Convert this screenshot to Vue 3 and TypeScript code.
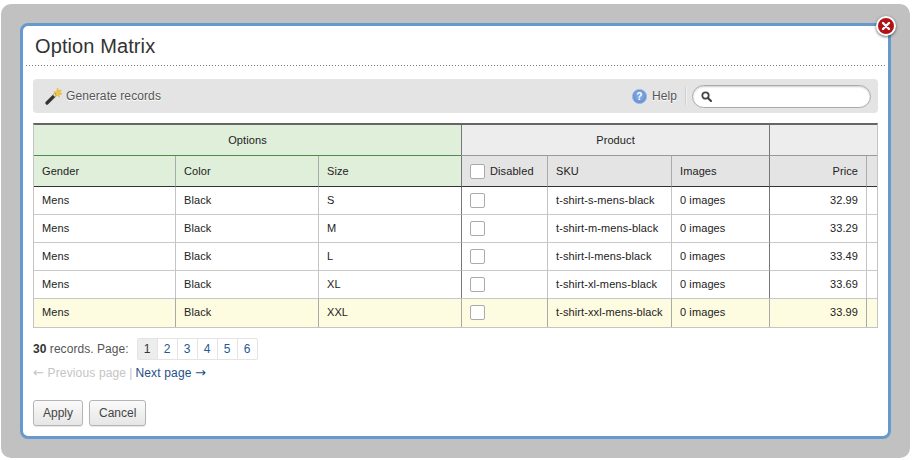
<template>
  <div class="backdrop">
    <div class="dialog">
      <button class="close" aria-label="Close">
        <svg width="10" height="10" viewBox="0 0 10 10">
          <path d="M2 2l6 6M8 2l-6 6" stroke="#fff" stroke-width="2.4" stroke-linecap="round" />
        </svg>
      </button>
      <h1 class="title">Option Matrix</h1>

      <div class="toolbar">
        <a class="generate">
          <svg width="18" height="18" viewBox="0 0 18 18">
            <path d="M2 16L10 8" stroke="#333" stroke-width="3.2" stroke-linecap="round" />
            <path d="M9 9l1.6-1.6" stroke="#ddd" stroke-width="3" />
            <path d="M12.5 1l.9 2.8 2.8-.9-1.3 2.6L17 7l-2.9.4.3 2.9-2-2.2-2.4 1.3 1-2.8-2.2-1.8 2.9.1z" fill="#f3c93a" stroke="#e2a71c" stroke-width=".5" />
          </svg>
          Generate records
        </a>
        <span class="help">
          <span class="help-icon">?</span>
          Help
        </span>
        <span class="sep"></span>
        <div class="search">
          <svg width="11" height="11" viewBox="0 0 11 11">
            <circle cx="4.5" cy="4.5" r="3.2" fill="none" stroke="#444" stroke-width="1.8" />
            <path d="M7 7l3 3" stroke="#444" stroke-width="2.2" stroke-linecap="round" />
          </svg>
        </div>
      </div>

      <table class="matrix">
        <colgroup>
          <col v-for="w in colWidths" :key="w.id" :style="{ width: w.px + 'px' }" />
        </colgroup>
        <thead>
          <tr class="groups">
            <th colspan="3" class="green center">Options</th>
            <th colspan="3" class="grey center strong-left">Product</th>
            <th colspan="2" class="grey strong-left"></th>
          </tr>
          <tr class="labels">
            <th class="green">Gender</th>
            <th class="green">Color</th>
            <th class="green">Size</th>
            <th class="grey2 strong-left">
              <span class="check-label"><span class="check"></span>Disabled</span>
            </th>
            <th class="grey2">SKU</th>
            <th class="grey2">Images</th>
            <th class="grey2 right strong-left">Price</th>
            <th class="grey2"></th>
          </tr>
        </thead>
        <tbody>
          <tr v-for="row in rows" :key="row.sku" :class="{ hovered: row.size === 'XXL' }">
            <td>Mens</td>
            <td>Black</td>
            <td>{{ row.size }}</td>
            <td class="strong-left"><span class="check"></span></td>
            <td>{{ row.sku }}</td>
            <td>0 images</td>
            <td class="right strong-left">{{ row.price }}</td>
            <td></td>
          </tr>
        </tbody>
      </table>

      <div class="paging">
        <span class="count"><b>30</b> records. Page:</span>
        <div class="pages">
          <a v-for="p in pages" :key="p" :class="{ current: p === 1 }">{{ p }}</a>
        </div>
      </div>
      <div class="prev-next">
        <span class="off"><span class="arrow">←</span> Previous page</span>
        <span class="off bar">|</span>
        <a>Next page <span class="arrow">→</span></a>
      </div>

      <div class="actions">
        <button class="btn">Apply</button>
        <button class="btn">Cancel</button>
      </div>
    </div>
  </div>
</template>

<script setup lang="ts">
const colWidths = [
  { id: 'gender', px: 141 },
  { id: 'color', px: 143 },
  { id: 'size', px: 143 },
  { id: 'disabled', px: 86 },
  { id: 'sku', px: 124 },
  { id: 'images', px: 98 },
  { id: 'price', px: 97 },
  { id: 'end', px: 11 }
];

const rows = [
  { size: 'S', sku: 't-shirt-s-mens-black', price: '32.99' },
  { size: 'M', sku: 't-shirt-m-mens-black', price: '33.29' },
  { size: 'L', sku: 't-shirt-l-mens-black', price: '33.49' },
  { size: 'XL', sku: 't-shirt-xl-mens-black', price: '33.69' },
  { size: 'XXL', sku: 't-shirt-xxl-mens-black', price: '33.99' }
];

const pages = [1, 2, 3, 4, 5, 6];
</script>

<style>
html,
body {
  margin: 0;
  background: #fff;
}
</style>

<style scoped>
.backdrop {
  box-sizing: border-box;
  width: 909px;
  height: 454px;
  margin: 4px 0 0 1px;
  padding: 19px;
  background: #c1c1c1;
  border-radius: 10px;
  font-family: "Liberation Sans", Arial, sans-serif;
}

.dialog {
  position: relative;
  box-sizing: border-box;
  width: 871px;
  height: 416px;
  background: #fff;
  border: 3px solid #6699cc;
  border-radius: 8px;
}

.close {
  position: absolute;
  top: -10px;
  right: -8px;
  box-sizing: border-box;
  width: 20px;
  height: 20px;
  padding: 0;
  display: flex;
  align-items: center;
  justify-content: center;
  background: #b01217;
  border: 2px solid #fff;
  border-radius: 50%;
  box-shadow: 0 1px 3px rgba(0, 0, 0, 0.6);
}

.title {
  box-sizing: border-box;
  height: 40px;
  margin: 0 3px;
  padding: 6px 9px 0;
  font-size: 20px;
  line-height: 28px;
  letter-spacing: 0.1px;
  font-weight: normal;
  color: #333;
  background: linear-gradient(to right, #777 33%, transparent 0) left bottom / 3px 1px repeat-x;
}

.toolbar {
  display: flex;
  align-items: center;
  height: 34px;
  margin: 13px 10px 0;
  padding: 0 7px 0 12px;
  background: #e4e4e4;
  border-radius: 4px;
  font-size: 12px;
  letter-spacing: 0.1px;
  color: #555;
  text-shadow: 0 1px 0 #fff;
}

.generate {
  display: flex;
  align-items: center;
  gap: 3px;
  margin-right: auto;
}

.help {
  display: flex;
  align-items: center;
  gap: 5px;
}

.help-icon {
  box-sizing: border-box;
  width: 15px;
  height: 15px;
  border-radius: 50%;
  border: 1px solid #8fb0dc;
  background: radial-gradient(circle at 50% 45%, #7ea6e0 30%, #4f82c8);
  color: #fff;
  font-size: 10px;
  font-weight: bold;
  line-height: 13px;
  text-align: center;
  text-shadow: none;
}

.sep {
  width: 1px;
  height: 18px;
  margin: 0 5px 0 8px;
  background: #d0d0d0;
  border-right: 1px solid #f2f2f2;
}

.search {
  box-sizing: border-box;
  display: flex;
  align-items: center;
  width: 179px;
  height: 23px;
  padding-left: 8px;
  background: #fff;
  border: 1px solid #aaa;
  border-radius: 12px;
  box-shadow: inset 0 1px 2px rgba(0, 0, 0, 0.2);
}

.matrix {
  box-sizing: border-box;
  width: 845px;
  margin: 10px 0 0 10px;
  table-layout: fixed;
  border-collapse: separate;
  border-spacing: 0;
  border-top: 2px solid #666;
  border-left: 1px solid #c4c4c4;
  border-right: 1px solid #c4c4c4;
  border-bottom: 1px solid #c4c4c4;
  font-size: 11px;
  letter-spacing: 0.1px;
  color: #222;
}

th,
td {
  box-sizing: border-box;
  padding: 0 8px;
  text-align: left;
  font-weight: normal;
  border-left: 1px solid #c4c4c4;
}

th:first-child,
td:first-child {
  border-left: 0;
}

.groups th {
  height: 31px;
  border-bottom: 1px solid #999;
}

.groups th.green {
  border-bottom-color: #4f8a4f;
}

.labels th {
  height: 31px;
  border-bottom: 1px solid #333;
  border-left-color: #aaa;
}

tbody td {
  height: 28px;
  padding-bottom: 2px;
  border-top: 1px solid #c8c8c8;
}

tbody tr:first-child td {
  border-top: 0;
  height: 27px;
}

tbody tr:last-child td {
  height: 29px;
  padding-bottom: 3px;
}

tbody .check {
  margin: 1px 0 -1px;
}

.center {
  text-align: center;
}

.right {
  text-align: right;
}

.green {
  background: #dfefd9;
}

.grey {
  background: #ededed;
}

.grey2 {
  background: #e4e4e4;
}

th.strong-left,
td.strong-left,
.labels th.strong-left {
  border-left-color: #777;
}

.hovered td {
  background: #fdfbe0;
  border-left-color: #aaa;
}

.check-label {
  display: flex;
  align-items: center;
  gap: 5px;
}

.check {
  display: block;
  box-sizing: border-box;
  width: 15px;
  height: 15px;
  background: #fff;
  border: 1px solid #aaa;
  border-radius: 2px;
}

.paging {
  display: flex;
  align-items: center;
  gap: 8px;
  margin: 10px 0 0 10px;
  font-size: 12px;
  color: #555;
}

.count {
  letter-spacing: 0.05px;
}

.paging b {
  color: #333;
}

.pages {
  display: flex;
  border: 1px solid #e4e4e4;
  border-radius: 2px;
}

.pages a {
  box-sizing: border-box;
  width: 20px;
  height: 20px;
  line-height: 20px;
  text-align: center;
  color: #1f5a94;
  border-left: 1px solid #e4e4e4;
}

.pages a:first-child {
  width: 19px;
  border-left: 0;
}

.pages a.current {
  background: #ededed;
  color: #333;
}

.prev-next {
  margin: 5px 0 0 10px;
  font-size: 12px;
  line-height: 15px;
  letter-spacing: 0.15px;
  color: #1f4f8a;
}

.arrow {
  font-family: "DejaVu Sans", sans-serif;
  font-size: 13px;
}

.off {
  color: #c4c4c4;
}

.bar {
  margin: 0 3px;
}

.actions {
  display: flex;
  gap: 6px;
  margin: 19px 0 0 10px;
}

.btn {
  box-sizing: border-box;
  height: 26px;
  padding: 0 9px;
  font-family: inherit;
  font-size: 12px;
  color: #444;
  background: linear-gradient(#fafafa, #e6e6e6);
  border: 1px solid #b4b4b4;
  border-radius: 3px;
  box-shadow: 0 1px 1px rgba(0, 0, 0, 0.1);
}
</style>
